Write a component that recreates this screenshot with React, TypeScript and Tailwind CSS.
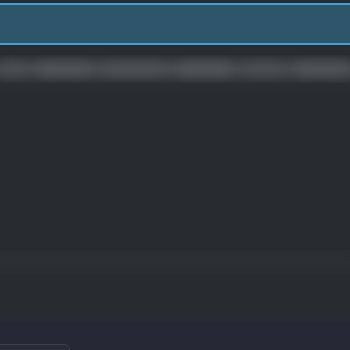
export default function App() {
  return (
    <div className="flex h-[350px] w-[350px] flex-col overflow-hidden bg-[#282b30] font-['Liberation_Sans',sans-serif]">
      {/* Top bar */}
      <div className="h-[3px] bg-[#2a2c31]" />
      <div className="h-[42px] border-y-2 border-[#3ea1dc] bg-[#2e5569]" />

      {/* Blurred header row */}
      <div className="h-[10px] bg-[#292c31]" />
      <div className="relative h-[28px] overflow-hidden bg-gradient-to-b from-[#2c2f33] via-[#45484c] to-[#2c2f33]">
        <div className="absolute inset-0 flex items-center gap-2 px-0 blur-[7px]">
          <div className="h-3 w-10 bg-[#4e5155]" />
          <div className="h-3 w-20 bg-[#54575b]" />
          <div className="h-3 w-24 bg-[#505357]" />
          <div className="h-3 w-20 bg-[#55585c]" />
          <div className="h-3 w-16 bg-[#4c4f53]" />
          <div className="h-3 w-20 bg-[#54575b]" />
        </div>
      </div>

      {/* Body */}
      <div className="h-[12px] bg-gradient-to-b from-[#2b2e32] to-[#282b30]" />
      <div className="flex-1 bg-[#282b30]" />
      <div className="h-[24px] bg-gradient-to-b from-[#2a2d31] via-[#2c2f33] to-[#292c30]" />
      <div className="h-[48px] bg-[#282b30]" />

      {/* Footer */}
      <div className="relative h-[28px] bg-[#262836]">
        <div className="absolute bottom-[-10px] left-[-8px] h-[16px] w-[78px] rounded-md border border-[#3b3e4c] bg-[#282a38]" />
      </div>
    </div>
  );
}
